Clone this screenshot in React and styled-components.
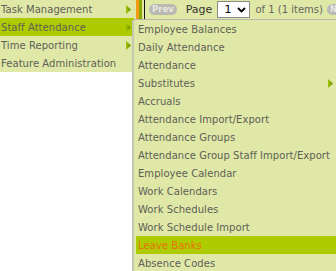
import React from "react";
import styled, { createGlobalStyle } from "styled-components";

const Global = createGlobalStyle`
  html, body { margin: 0; padding: 0; background: #ffffff; }
  body { font-family: "DejaVu Sans", Verdana, sans-serif; }
`;

const Page = styled.div`
  display: flex;
  align-items: flex-start;
  width: 336px;
  height: 271px;
  overflow: hidden;
`;

const MainMenu = styled.ul`
  list-style: none;
  margin: 0;
  padding: 0;
  width: 134px;
  flex: none;
  background: #dfe8a6;
`;

const MenuItem = styled.li`
  display: flex;
  align-items: center;
  justify-content: space-between;
  height: 18px;
  padding: 1px 3px 0 1px;
  box-sizing: border-box;
  font-size: 10px;
  color: ${(p) => (p.$current ? "#e8720c" : "#606058")};
  background: ${(p) => (p.$active ? "#aecb00" : "transparent")};
  white-space: nowrap;
`;

const Label = styled.span`
  letter-spacing: 0.05px;
`;

const Arrow = () => (
  <svg width="5" height="9" viewBox="0 0 5 9">
    <defs>
      <linearGradient id="ag" x1="0" y1="0" x2="1" y2="0">
        <stop offset="0" stopColor="#a6c400" />
        <stop offset="1" stopColor="#5a8c00" />
      </linearGradient>
    </defs>
    <path d="M0 0 L5 4.5 L0 9 Z" fill="url(#ag)" />
  </svg>
);

const Right = styled.div`
  flex: 1;
  display: flex;
  flex-direction: column;
  min-width: 0;
`;

const Toolbar = styled.div`
  display: flex;
  align-items: center;
  height: 19px;
  background: #dfe8a6;
  border-bottom: 1px solid #b8b8a8;
  white-space: nowrap;
  overflow: hidden;
`;

const Stripe = styled.div`
  width: ${(p) => p.$w}px;
  align-self: stretch;
  background: ${(p) => p.$c};
  flex: none;
`;

const Pill = styled.span`
  display: inline-block;
  flex: none;
  height: 11px;
  line-height: 11px;
  padding: 0 3px;
  margin: 0 ${(p) => p.$mr || 0}px 0 ${(p) => p.$ml || 0}px;
  border-radius: 6px;
  background: #b9b9b2;
  color: #e8e8e2;
  font-size: 8.5px;
  font-weight: bold;
`;

const PageText = styled.span`
  font-size: ${(p) => (p.$muted ? 10 : 11)}px;
  color: ${(p) => (p.$muted ? "#666660" : "#333333")};
  margin: 0 ${(p) => p.$mr || 0}px 0 ${(p) => p.$ml || 0}px;
  flex: none;
`;

const SelectBox = styled.span`
  display: inline-flex;
  align-items: center;
  justify-content: space-between;
  box-sizing: border-box;
  width: 33px;
  height: 17px;
  margin-left: ${(p) => p.$ml || 0}px;
  padding: 0 3px 0 6px;
  border: 1px solid #8a8a8a;
  background: #ffffff;
  font-size: 11px;
  color: #000;
  flex: none;
`;

const SubMenu = styled.ul`
  list-style: none;
  margin: 0;
  padding: 0 0 0 2px;
  border-left: 2px solid #c4c8b0;
  background: #dfe8a6;
  margin-left: -2px;
`;

const SubItem = styled(MenuItem)`
  padding-left: 2px;
  padding-top: 0;
`;

const mainItems = [
  { label: "Task Management", arrow: true },
  { label: "Staff Attendance", arrow: true, active: true },
  { label: "Time Reporting", arrow: true },
  { label: "Feature Administration" },
];

const subItems = [
  { label: "Employee Balances" },
  { label: "Daily Attendance" },
  { label: "Attendance" },
  { label: "Substitutes", arrow: true },
  { label: "Accruals" },
  { label: "Attendance Import/Export" },
  { label: "Attendance Groups" },
  { label: "Attendance Group Staff Import/Export" },
  { label: "Employee Calendar" },
  { label: "Work Calendars" },
  { label: "Work Schedules" },
  { label: "Work Schedule Import" },
  { label: "Leave Banks", active: true, current: true },
  { label: "Absence Codes" },
];

export default function App() {
  return (
    <>
      <Global />
      <Page>
        <MainMenu>
          {mainItems.map((it) => (
            <MenuItem key={it.label} $active={it.active}>
              <Label>{it.label}</Label>
              {it.arrow && <Arrow />}
            </MenuItem>
          ))}
        </MainMenu>
        <Right>
          <Toolbar>
            <Stripe $w={2} $c="#dfe8a6" />
            <Stripe $w={3} $c="#f39a12" />
            <Stripe $w={3} $c="#86a800" />
            <Stripe $w={2} $c="#dfe8a6" />
            <Stripe $w={1} $c="#111" />
            <Pill $ml={4} $mr={9}>Prev</Pill>
            <PageText>Page</PageText>
            <SelectBox $ml={5}>
              <span>1</span>
              <svg width="9" height="6" viewBox="0 0 9 6">
                <path d="M1 1 L4.5 4.5 L8 1" stroke="#000" strokeWidth="1.8" fill="none" />
              </svg>
            </SelectBox>
            <PageText $muted $ml={5} $mr={4}>of 1 (1 items)</PageText>
            <Pill>Next</Pill>
          </Toolbar>
          <SubMenu>
            {subItems.map((it) => (
              <SubItem key={it.label} $active={it.active} $current={it.current}>
                <Label>{it.label}</Label>
                {it.arrow && <Arrow />}
              </SubItem>
            ))}
          </SubMenu>
        </Right>
      </Page>
    </>
  );
}
